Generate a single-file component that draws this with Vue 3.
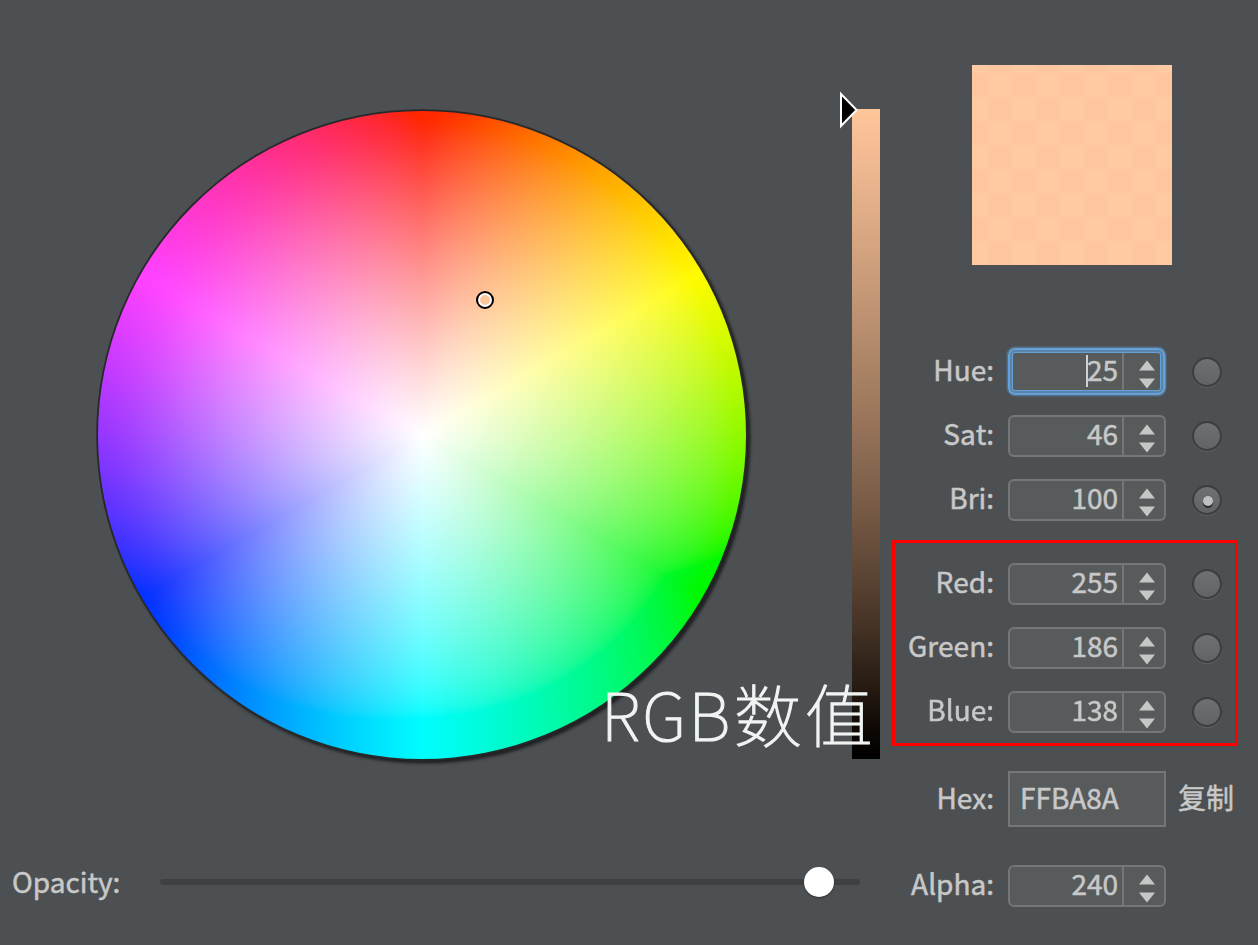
<script setup>
import { onMounted, ref } from 'vue'

const wheel = ref(null)
const hsb = [
  { label: 'Hue:', value: 25, focused: true },
  { label: 'Sat:', value: 46 },
  { label: 'Bri:', value: 100, checked: true },
]
const rgb = [
  { label: 'Red:', value: 255 },
  { label: 'Green:', value: 186 },
  { label: 'Blue:', value: 138 },
]
const opacity = 94.1

// Display profile: gamma 1.8 source converted to sRGB
const MATRIX = [
  [1.0253, -0.0264, 0.0012],
  [0.0194, 0.9479, 0.0326],
  [-0.0018, -0.0014, 1.0033],
]
const encode = (v) => {
  const c = Math.min(1, Math.max(0, v))
  return 255 * (c <= 0.0031308 ? 12.92 * c : 1.055 * c ** (1 / 2.4) - 0.055)
}
const toDisplay = (color) => {
  const lin = color.map((c) => c ** 1.8)
  return MATRIX.map((m) => encode(m[0] * lin[0] + m[1] * lin[1] + m[2] * lin[2]))
}
const hsv = (h, s) =>
  [5, 3, 1].map((n) => {
    const k = (n + h / 60) % 6
    return 1 - s * Math.max(0, Math.min(k, 4 - k, 1))
  })

const stops = Array.from({ length: 21 }, (_, i) => {
  const v = 1 - i / 20
  return `rgb(${toDisplay([v, (186 / 255) * v, (138 / 255) * v]).map(Math.round).join(',')})`
})
const barStyle = { background: `linear-gradient(${stops.join(',')})` }

onMounted(() => {
  const size = 648
  const ctx = wheel.value.getContext('2d')
  const image = ctx.createImageData(size, size)
  for (let y = 0; y < size; y++) {
    for (let x = 0; x < size; x++) {
      const dx = x + 0.5 - size / 2
      const dy = y + 0.5 - size / 2
      const hue = ((Math.atan2(dx, -dy) * 180) / Math.PI + 360) % 360
      const sat = Math.min(1, Math.hypot(dx, dy) / (size / 2))
      image.data.set([...toDisplay(hsv(hue, sat)), 255], (y * size + x) * 4)
    }
  }
  ctx.putImageData(image, 0, 0)
})
</script>

<template>
  <main class="picker">
    <section class="left">
      <div class="colors">
        <div class="wheel">
          <canvas ref="wheel" class="disc" width="648" height="648"></canvas>
          <i class="marker"></i>
        </div>
        <div class="bar" :style="barStyle">
          <svg class="pointer" width="22" height="40" viewBox="0 0 22 40">
            <path d="M3 4V36L18.6 20Z" fill="#000" stroke="#fff" stroke-width="2" />
          </svg>
        </div>
      </div>
      <div class="opacity">
        <span class="opacity-label">Opacity:</span>
        <div class="track"><i class="knob" :style="{ left: opacity + '%' }"></i></div>
      </div>
      <div class="caption"><span class="latin">RGB</span><span class="han">数值</span></div>
    </section>

    <section class="right">
      <div class="swatch"></div>
      <div class="group">
        <div v-for="f in hsb" :key="f.label" class="row">
          <label>{{ f.label }}</label>
          <div class="field" :class="{ focused: f.focused }">
            <span class="value"><i v-if="f.focused" class="caret"></i>{{ f.value }}</span>
            <svg class="steps" width="42" height="38" viewBox="0 0 40 38">
              <path d="M15 17.5L23 7.5L31 17.5ZM15 25.5L23 35.5L31 25.5Z" />
            </svg>
          </div>
          <i class="radio" :class="{ checked: f.checked }"></i>
        </div>
      </div>
      <div class="group boxed">
        <div v-for="f in rgb" :key="f.label" class="row">
          <label>{{ f.label }}</label>
          <div class="field">
            <span class="value">{{ f.value }}</span>
            <svg class="steps" width="42" height="38" viewBox="0 0 40 38">
              <path d="M15 17.5L23 7.5L31 17.5ZM15 25.5L23 35.5L31 25.5Z" />
            </svg>
          </div>
          <i class="radio"></i>
        </div>
      </div>
      <div class="row hex-row">
        <label>Hex:</label>
        <div class="hex">FFBA8A</div>
        <span class="copy">复制</span>
      </div>
      <div class="row alpha-row">
        <label>Alpha:</label>
        <div class="field">
          <span class="value">240</span>
          <svg class="steps" width="42" height="38" viewBox="0 0 40 38">
            <path d="M15 17.5L23 7.5L31 17.5ZM15 25.5L23 35.5L31 25.5Z" />
          </svg>
        </div>
      </div>
    </section>
  </main>
</template>

<style>
body {
  background: #4d5052;
}
</style>

<style scoped>
* {
  box-sizing: border-box;
}
.picker {
  display: flex;
  width: 1258px;
  height: 945px;
  overflow: hidden;
  background: #4d5052;
  color: #c8c8c8;
  font: 28px/42px 'Noto Sans CJK SC', sans-serif;
  -webkit-text-stroke: 0.5px #c8c8c8;
}
.left {
  position: relative;
  width: 892px;
  padding-top: 109px;
}
.colors {
  display: flex;
  gap: 106px;
  margin-left: 98px;
}
.wheel {
  position: relative;
  width: 648px;
  height: 648px;
  margin-top: 2px;
  border-radius: 50%;
  background: #2a292b;
  box-shadow: 0 0 0 1.8px #29282a, 3px 3px 3px 1.5px rgba(28, 28, 31, 0.9);
}
.disc {
  display: block;
  border-radius: 50%;
}
.marker {
  position: absolute;
  left: 378px;
  top: 180px;
  width: 18px;
  height: 18px;
  border: 2px solid #000;
  border-radius: 50%;
  background: #fec69d;
  box-shadow: inset 0 0 0 2px #fff;
}
.bar {
  position: relative;
  width: 28px;
  height: 650px;
}
.pointer {
  position: absolute;
  left: -14px;
  top: -19px;
}
.opacity {
  display: flex;
  align-items: center;
  height: 42px;
  margin-top: 102px;
  padding-left: 12px;
}
.opacity-label {
  position: relative;
  top: -1px;
  width: 148px;
}
.track {
  position: relative;
  width: 700px;
  height: 6px;
  border-radius: 3px;
  background: #3f4041;
}
.knob {
  position: absolute;
  top: -12px;
  width: 30px;
  height: 30px;
  margin-left: -15px;
  border-radius: 50%;
  background: #fff;
  box-shadow: 0 1px 2px rgba(0, 0, 0, 0.4);
}
.caption {
  position: absolute;
  left: 601px;
  top: 667px;
  display: flex;
  color: #f0f4f2;
  font-size: 66px;
  line-height: 90px;
  font-weight: 100;
  white-space: nowrap;
  -webkit-text-stroke: 1.2px #f0f4f2;
}
.latin {
  letter-spacing: 2.5px;
}
.han {
  position: relative;
  left: 1px;
  top: 1px;
  font-size: 68px;
  letter-spacing: 3px;
}
.right {
  width: 346px;
  padding-top: 65px;
}
.swatch {
  width: 200px;
  height: 200px;
  margin: 0 0 86px 80px;
  background: repeating-conic-gradient(#fec59e 0 25%, #ffcaa2 0 50%) -8px -16px / 48px 48px;
}
.group {
  display: grid;
  gap: 22px;
}
.boxed {
  margin-top: 19px;
  padding: 23px 0 13px;
  box-shadow: inset 0 0 0 3px #f00;
}
.row {
  display: grid;
  grid-template-columns: 102px 158px auto;
  align-items: center;
  column-gap: 14px;
}
label {
  text-align: right;
  position: relative;
  top: -3px;
  font-kerning: none;
}
.field {
  position: relative;
  display: flex;
  width: 158px;
  height: 42px;
  border: 2px solid #767677;
  border-radius: 6px;
  background: #575b5c;
}
.value {
  position: relative;
  flex: 1;
  padding-right: 4px;
  line-height: 33px;
  text-align: right;
}
.caret {
  position: absolute;
  right: 34px;
  top: 2px;
  width: 2px;
  height: 32px;
  background: #d0d0d0;
}
.steps {
  border-left: 2px solid #767677;
  fill: #c6c6c6;
}
.focused::after {
  content: '';
  position: absolute;
  inset: -5px -1px -4px -2px;
  border: 2px solid #65a1d9;
  border-radius: 7px;
  box-shadow: 0 0 0 1.5px rgba(95, 140, 180, 0.5), inset 0 0 0 2px #5b84aa, inset 0 0 0 3px #65a1d9;
}
.radio {
  position: relative;
  width: 30px;
  height: 30px;
  margin-left: 12px;
  border: 2px solid #3d3e40;
  border-radius: 50%;
  background: linear-gradient(#6d7173, #606466) padding-box;
  box-shadow: 0 1.5px 0 #5a5d5f;
}
.checked::after {
  content: '';
  position: absolute;
  left: 9px;
  top: 9px;
  width: 10px;
  height: 10px;
  border-radius: 50%;
  background: #c0c0c0;
  box-shadow: 0 2px 0 #29292a;
}
.hex-row {
  margin-top: 25px;
}
.hex {
  height: 56px;
  padding-left: 10px;
  border: 2px solid #767677;
  background: #575b5c;
  line-height: 48px;
}
.hex-row label,
.hex-row .copy {
  top: -2px;
}
.copy {
  position: relative;
  margin-left: -2px;
  white-space: nowrap;
}
.alpha-row {
  margin-top: 38px;
}
</style>
